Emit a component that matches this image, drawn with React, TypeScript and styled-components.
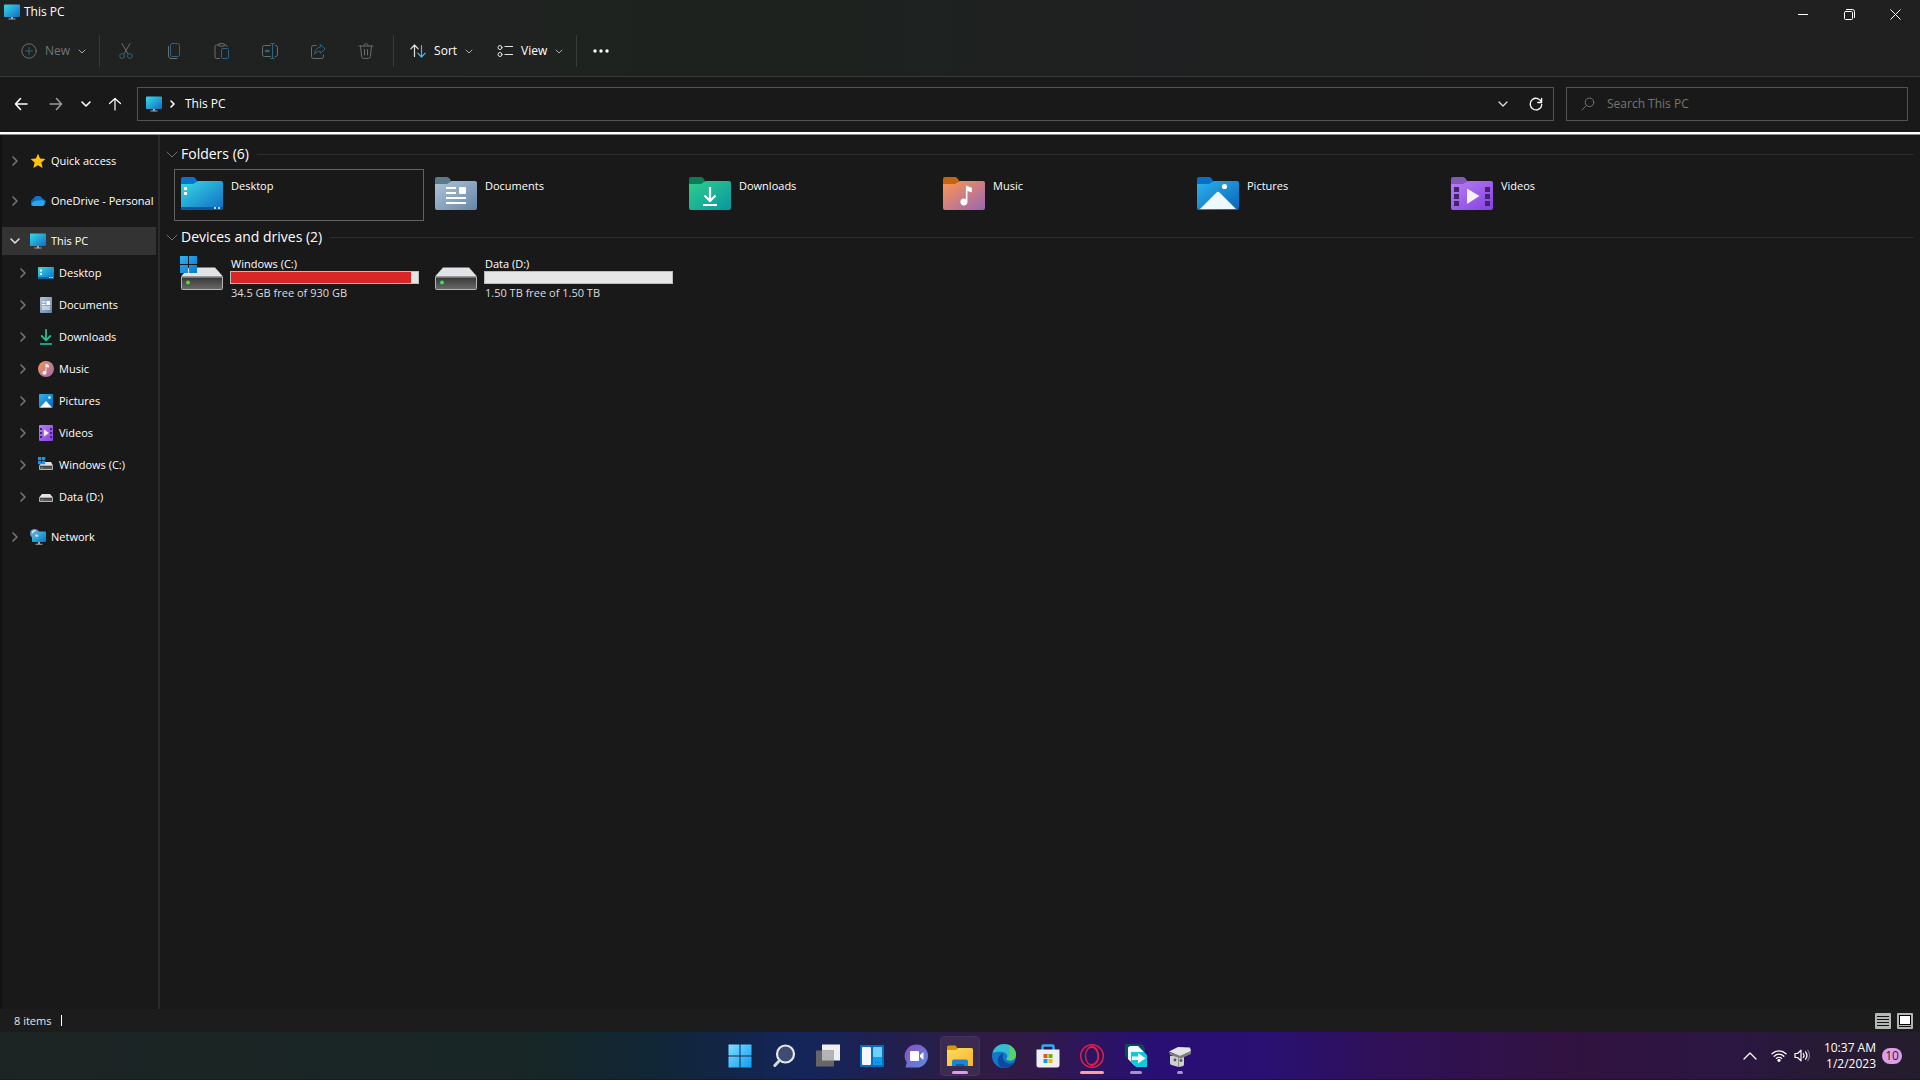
import React, { ReactNode } from "react";
import styled, { createGlobalStyle } from "styled-components";

const GlobalStyle = createGlobalStyle`
  * { box-sizing: border-box; }
  body { margin: 0; background: #191919; }
  body, button, input {
    font-family: "Open Sans", "Noto Sans", sans-serif;
    font-size: 12px;
    line-height: 16px;
    color: #fff;
  }
  button {
    border: 0;
    padding: 0;
    margin: 0;
    background: transparent;
    cursor: default;
  }
  svg { display: block; flex: none; }
  h2 { margin: 0; font-weight: 400; }
  ul { list-style: none; margin: 0; padding: 0; }
`;

const Screen = styled.div`
  display: flex;
  flex-direction: column;
  min-height: 100vh;
`;

/* ---------- window header ---------- */

const Header = styled.header`
  border-bottom: 1px solid #3a3a3a;
  background: linear-gradient(90deg, #202121 0%, #1f2220 28%, #1d221e 40%, #1e2120 52%, #1e2021 60%, #202020 75%, #202020 100%);
`;

const TitleBar = styled.div`
  display: flex;
  justify-content: space-between;
  align-items: flex-start;
  height: 28px;
  padding: 0 2px 0 4px;
`;

const Title = styled.div`
  display: flex;
  align-items: center;
  gap: 4px;
  height: 24px;
`;

const WindowButtons = styled.div`
  display: flex;
`;

const WindowButton = styled.button`
  display: grid;
  place-items: center;
  width: 46px;
  height: 28px;
`;

const Toolbar = styled.div`
  display: flex;
  align-items: center;
  height: 48px;
  padding: 0 5px 2px;
`;

const ToolGroup = styled.div`
  display: flex;
  align-items: center;
  height: 32px;
  padding: 0 3px 0 2px;
  border-right: 1px solid #393b3a;
`;

const TextTool = styled.button<{ $dim?: boolean }>`
  display: flex;
  align-items: center;
  gap: 8px;
  height: 32px;
  padding: 0 10px 0 14px;
  color: ${(p) => (p.$dim ? "#747575" : "#fff")};
`;

const IconTool = styled.button`
  display: grid;
  place-items: center;
  width: 48px;
  height: 32px;
`;

/* ---------- navigation row ---------- */

const NavRow = styled.div`
  display: flex;
  align-items: center;
  height: 55px;
  padding: 0 12px 1px 6px;
  background: #191919;
`;

const NavButtons = styled.div`
  display: flex;
  align-items: center;
  width: 131px;
`;

const NavButton = styled.button<{ $w: number }>`
  display: grid;
  place-items: center;
  width: ${(p) => p.$w}px;
  height: 32px;
`;

const Field = styled.div`
  display: flex;
  align-items: center;
  height: 34px;
  border: 1px solid #535353;
`;

const AddressBar = styled(Field)`
  flex: 1;
  gap: 6px;
  padding: 0 5px 0 8px;
`;

const Crumb = styled.a`
  flex: 1;
  padding-left: 3px;
  color: #fff;
  text-decoration: none;
`;

const SearchBox = styled(Field)`
  width: 342px;
  gap: 12px;
  margin-left: 12px;
  padding: 0 14px;
`;

const SearchInput = styled.input`
  flex: 1;
  min-width: 0;
  border: 0;
  padding: 0;
  outline: 0;
  background: transparent;
  &::placeholder { color: #767676; opacity: 1; }
`;

const LoadingLine = styled.div`
  height: 3px;
  background: #fff;
  border-bottom: 1px solid #8a8a8a;
`;

/* ---------- body ---------- */

const Body = styled.div`
  display: flex;
  flex: 1;
`;

const Sidebar = styled.nav`
  width: 160px;
  padding: 12px 2px 0 0;
  border-left: 2px solid #121212;
  border-right: 2px solid #2b2b2b;
`;

const Tree = styled.ul`
  display: flex;
  flex-direction: column;
  gap: 12px;
`;

const Branch = styled.ul`
  display: flex;
  flex-direction: column;
  gap: 4px;
  padding-top: 4px;
`;

const TreeRow = styled.button<{ $child?: boolean; $active?: boolean }>`
  display: grid;
  grid-template-columns: 24px 16px 1fr;
  align-items: center;
  width: 100%;
  height: 28px;
  padding-left: ${(p) => (p.$child ? 12 : 4)}px;
  background: ${(p) => (p.$active ? "#333" : "transparent")};
  font-size: 11px;
  text-align: left;
  white-space: nowrap;
`;

const TreeChevron = styled.span`
  display: grid;
  place-items: center;
  width: 18px;
`;

const TreeLabel = styled.span`
  padding-left: 5px;
`;

const Content = styled.main`
  flex: 1;
  min-width: 0;
  padding: 8px 6px 0;
`;

const Group = styled.section`
  margin-bottom: 5px;
`;

const GroupHeader = styled.h2`
  display: flex;
  align-items: center;
  gap: 3px;
  height: 22px;
  font-size: 14px;
  line-height: 20px;
  &::after {
    content: "";
    flex: 1;
    height: 1px;
    margin-left: 5px;
    background: #2e2e2e;
  }
`;

const Tiles = styled.div`
  display: grid;
  grid-template-columns: repeat(auto-fill, 250px);
  gap: 4px;
  padding: 4px 0 0 8px;
`;

const Tile = styled.button<{ $selected?: boolean }>`
  display: flex;
  align-items: flex-start;
  gap: 8px;
  height: 52px;
  padding: 7px 4px 0 6px;
  border: 1px solid ${(p) => (p.$selected ? "#626262" : "transparent")};
  font-size: 11px;
  text-align: left;
`;

const TileName = styled.span`
  padding-top: 1px;
`;

const DriveTile = styled(Tile)`
  padding: 3px 4px 0 5px;
`;

const DriveInfo = styled.span`
  display: flex;
  flex-direction: column;
  flex: 1;
  line-height: 15px;
`;

const Bar = styled.span`
  display: block;
  height: 13px;
  margin-left: -1px;
  border: 1px solid #bcbcbc;
  background: #e6e6e6;
`;

const BarFill = styled.span`
  display: block;
  height: 100%;
  background: #da2626;
`;

const Small = styled.span`
  padding-top: 1px;
  color: #dcdcdc;
`;

const StatusBar = styled.footer`
  display: flex;
  align-items: center;
  justify-content: space-between;
  height: 23px;
  padding: 0 7px 0 14px;
  background: #1c1c1c;
`;

const ItemCount = styled.span`
  display: flex;
  align-items: center;
  gap: 10px;
  font-size: 11px;
  color: #e6e6e6;
  &::after {
    content: "";
    width: 1px;
    height: 11px;
    background: #fff;
  }
`;

const ViewToggles = styled.div`
  display: flex;
  gap: 6px;
`;

/* ---------- taskbar ---------- */

const TaskbarRoot = styled.div`
  display: grid;
  grid-template-columns: 1fr auto 1fr;
  align-items: center;
  height: 48px;
  border-bottom: 1px solid #21161f;
  background: linear-gradient(90deg, #1d2424 0%, #1a2625 16%, #182725 27%, #112636 34%, #14255a 42%, #1f2050 46%, #2f1c44 51%, #301a48 54%, #2c1460 57%, #290f74 60%, #2a1072 66%, #2f1058 72%, #31123f 82%, #2b1642 90%, #271936 94%, #241d2c 100%);
`;

const Apps = styled.div`
  grid-column: 2;
  display: flex;
  gap: 4px;
`;

const AppButton = styled.button<{ $active?: boolean }>`
  display: flex;
  flex-direction: column;
  align-items: center;
  justify-content: flex-end;
  gap: 3px;
  width: 40px;
  height: 40px;
  padding-bottom: 1px;
  border-radius: 4px;
  border: 1px solid ${(p) => (p.$active ? "#453458" : "transparent")};
  background: ${(p) => (p.$active ? "#3c2b50" : "transparent")};
`;

const Indicator = styled.span<{ $w: number; $color: string }>`
  width: ${(p) => p.$w}px;
  height: 3px;
  border-radius: 2px;
  background: ${(p) => p.$color};
`;

const Tray = styled.div`
  display: flex;
  align-items: center;
  justify-content: flex-end;
  padding-right: 18px;
`;

const TrayButton = styled.button`
  display: flex;
  align-items: center;
  gap: 7px;
  padding: 0 7px;
`;

const Clock = styled.button`
  padding: 0 6px 0 7px;
  text-align: right;
  line-height: 16px;
`;

const Badge = styled.span`
  width: 20px;
  height: 16px;
  border-radius: 8px;
  background: #de9ee6;
  color: #2a1a30;
  text-align: center;
`;

/* ---------- line icons ---------- */

type LineProps = { w?: number; h?: number; color?: string; sw?: number; children: ReactNode };
const Line = ({ w = 16, h = 16, color = "#fff", sw = 1, children }: LineProps) => (
  <svg width={w} height={h} viewBox={`0 0 ${w} ${h}`} fill="none" stroke={color} strokeWidth={sw} strokeLinecap="round" strokeLinejoin="round" aria-hidden="true">
    {children}
  </svg>
);

const ChevronDown = ({ color = "#aaa", size = 6, sw = 1 }: { color?: string; size?: number; sw?: number }) => (
  <Line w={size + 2} h={size / 2 + 2} color={color} sw={sw}>
    <path d={`M1 1l${size / 2} ${size / 2} ${size / 2}-${size / 2}`} />
  </Line>
);

const ChevronRight = ({ color = "#757575" }: { color?: string }) => (
  <Line w={6} h={10} color={color} sw={1.6}>
    <path d="M1 1l4 4-4 4" />
  </Line>
);

const CrumbArrow = () => (
  <Line w={8} h={8} sw={1.6}>
    <path d="M3 1l3 3-3 3" />
  </Line>
);

const GREY = "#6b6d6c";
const BLUE = "#2d6482";

const NewIcon = () => (
  <Line color={GREY}>
    <circle cx="8" cy="8" r="7.2" />
    <path d="M8 4.5v7M4.5 8h7" stroke={BLUE} />
  </Line>
);
const CutIcon = () => (
  <Line color={GREY}>
    <path d="M4 .6l5.8 10M12 .6L6.2 10.6" />
    <circle cx="4.1" cy="13" r="2.4" stroke={BLUE} />
    <circle cx="11.9" cy="13" r="2.4" stroke={BLUE} />
  </Line>
);
const CopyIcon = () => (
  <Line color={GREY}>
    <path d="M2.500 3.500v9.500a2.500 2.500 0 0 0 2.500 2.500h6" />
    <rect x="4.5" y=".5" width="9" height="13" rx="1.8" stroke={BLUE} />
  </Line>
);
const PasteIcon = () => (
  <Line color={GREY}>
    <path d="M5 2H2.500A1.500 1.500 0 0 0 1 3.500V14a1.500 1.500 0 0 0 1.500 1.500H5.500M10 2h1.500A1.500 1.500 0 0 1 13 3.500" />
    <rect x="4.5" y=".6" width="6" height="2.6" rx="1.3" />
    <rect x="7.5" y="5.5" width="7" height="10" rx="1.2" stroke={BLUE} />
  </Line>
);
const RenameIcon = () => (
  <Line color={GREY}>
    <path d="M8.500 2.500h-6a2 2 0 0 0-2 2v7a2 2 0 0 0 2 2h6M13 2.500h.5a2 2 0 0 1 2 2v7a2 2 0 0 1-2 2H13" />
    <path d="M10.500 .5v15M8.700 .5h3.600M8.700 15.500h3.600" stroke={BLUE} />
    <path d="M3 8h4.500" stroke={BLUE} strokeWidth="2.4" strokeLinecap="butt" />
  </Line>
);
const ShareIcon = () => (
  <Line color={GREY}>
    <path d="M6 2.500H3.500a2 2 0 0 0-2 2v9a2 2 0 0 0 2 2h8a2 2 0 0 0 2-2V12" />
    <path d="M10.200 1.500l5 4.500-5 4.500V8.200C7.800 8.200 6 9 4.600 11.200c.2-4 2.200-6.800 5.600-7.200z" stroke={BLUE} />
  </Line>
);
const DeleteIcon = () => (
  <Line color={GREY}>
    <path d="M1 3h14M5.800 3c0-1.400.9-2.300 2.200-2.300s2.200.9 2.200 2.300M2.500 3l1.100 10.600a2 2 0 0 0 2 1.800h4.800a2 2 0 0 0 2-1.800L13.500 3M6.500 6.500v5.500M9.500 6.500v5.500" />
  </Line>
);
const SortIcon = () => (
  <Line color="#e0e0e0" sw={1.2}>
    <path d="M4.500 13.500V2M.8 5.800L4.500 2l3.700 3.800" />
    <path d="M11.500 2.500v11.500M7.800 10.200l3.700 3.800 3.700-3.800" stroke="#4cb5ee" />
  </Line>
);
const ViewIcon = () => (
  <Line color="#e4e4e4">
    <circle cx="3" cy="4.5" r="2" />
    <circle cx="3" cy="11.5" r="2" />
    <path d="M8 3.500h7.500M8 11.500h7.500" strokeWidth="1.2" />
  </Line>
);
const DotsIcon = () => (
  <svg width="16" height="16" viewBox="0 0 16 16" fill="#fff" aria-hidden="true">
    <circle cx="2" cy="8" r="1.7" />
    <circle cx="8" cy="8" r="1.7" />
    <circle cx="14" cy="8" r="1.7" />
  </svg>
);
const SearchIcon = () => (
  <Line w={14} h={14} color="#747474">
    <circle cx="8.5" cy="5.3" r="4.3" />
    <path d="M5.400 8.500L1 13" />
  </Line>
);

/* ---------- colour icons ---------- */

const DefsSvg = styled.svg`
  position: absolute;
`;

const Defs = () => (
  <DefsSvg width="0" height="0" aria-hidden="true">
    <defs>
      {[
        ["gCyan", "#38dbe6", "#0f6cc4"],
        ["gDoc", "#b0c4da", "#6686a6"],
        ["gDown", "#32ce8c", "#0796a2"],
        ["gMusic", "#ff9650", "#9a66b4"],
        ["gPic", "#2eb2ec", "#0864bc"],
        ["gVid", "#b880f4", "#8440e0"],
        ["gStart", "#7ee0ff", "#109cf4"],
        ["gWin", "#30b0f4", "#0878d4"],
        ["gChat", "#8c50b8", "#5a8ce8"],
        ["gFile", "#ffdc60", "#f8b42c"],
      ].map(([id, a, b]) => (
        <linearGradient key={id} id={id} x1="0" y1="0" x2="1" y2="1">
          <stop offset="0" stopColor={a} />
          <stop offset="1" stopColor={b} />
        </linearGradient>
      ))}
      <linearGradient id="gDrive" x1="0" y1="0" x2="0" y2="1">
        <stop offset="0" stopColor="#363636" />
        <stop offset="1" stopColor="#6a6a6a" />
      </linearGradient>
    </defs>
  </DefsSvg>
);

const Pic = ({ w = 16, h = 16, children }: { w?: number; h?: number; children: ReactNode }) => (
  <svg width={w} height={h} viewBox={`0 0 ${w} ${h}`} aria-hidden="true">{children}</svg>
);

const Monitor = () => (
  <Pic>
    <rect width="16" height="12.5" y=".5" rx=".8" fill="url(#gCyan)" />
    <path d="M7 13h2v1.600h2.500v1h-7v-1H7z" fill="#a0aab2" />
  </Pic>
);
const Star = () => (
  <Pic>
    <path d="M8 .8l2.100 4.800 5.300.5-4 3.500 1.200 5.300L8 12.200 3.400 14.900l1.200-5.300-4-3.500 5.300-.5z" fill="#ffc20e" />
  </Pic>
);
const Cloud = () => (
  <Pic>
    <path d="M3.600 12.500A3.600 3.600 0 0 1 3.400 5.600 5.200 5.200 0 0 1 12.600 6L8 11z" fill="#0a66bc" />
    <path d="M3.400 5.600a5.200 5.200 0 0 1 9.200.4c2.300.3 3.400 1.800 3.400 3.400l-6-.4z" fill="#0c76d0" />
    <path d="M1 11.200c2-2.800 4-4 6.500-3.600 2 0 4-.8 6 .2A2.900 2.900 0 0 1 13 13H3.600c-1 0-2-.6-2.600-1.800z" fill="#28a8ea" />
  </Pic>
);
const DeskSmall = () => (
  <Pic>
    <rect y="2" width="16" height="12" rx="1" fill="url(#gCyan)" />
    <path d="M2 4.500h2v2H2zM2 8h2v2H2z" fill="#fff" />
    <path d="M0 12h16v1a1 1 0 0 1-1 1H1a1 1 0 0 1-1-1z" fill="#0d62a8" />
    <path d="M11 12h1.500v1H11zM13.300 12h1.500v1h-1.500z" fill="#cfe8ff" />
  </Pic>
);
const DocSmall = () => (
  <Pic>
    <rect x="2" width="12" height="16" rx="1" fill="url(#gDoc)" />
    <path d="M4 4.500h3.500v1H4zM4 7h3.500v1H4zM8.500 4h3.500v4H8.500zM4 9.500h8v1H4zM4 11.500h8v1H4z" fill="#fff" />
  </Pic>
);
const DownSmall = () => (
  <Line color="#27bf97" sw={1.8}>
    <path d="M8 1v10M3.700 7L8 11.300 12.300 7" />
    <path d="M2 15h12" stroke="#17b09a" strokeLinecap="butt" />
  </Line>
);
const Note = ({ t }: { t: string }) => (
  <g transform={t} fill="#fff">
    <path d="M5 0l5 2v4L6.300 4.600V14a3 3 0 1 1-1.300-2.500z" />
  </g>
);
const MusicSmall = () => (
  <Pic>
    <circle cx="8" cy="8" r="8" fill="url(#gMusic)" />
    <Note t="translate(4.4 2.8) scale(.64)" />
  </Pic>
);
const PicSmall = () => (
  <Pic>
    <rect x="1" y="1" width="14" height="14" rx="1" fill="url(#gPic)" />
    <path d="M2 14.500L8 8l6 6.500z" fill="#fff" />
    <circle cx="11.5" cy="4.5" r="1.3" fill="#fff" />
  </Pic>
);
const VidSmall = () => (
  <Pic>
    <rect x="1" width="14" height="16" rx="1" fill="url(#gVid)" />
    <path d="M2 3h2v2H2zM2 7h2v2H2zM2 11h2v2H2zM12 3h2v2h-2zM12 7h2v2h-2zM12 11h2v2h-2z" fill="#432468" />
    <path d="M6 4.500L11 8l-5 3.500z" fill="#f4f0fa" />
  </Pic>
);
const DriveShape = () => (
  <>
    <path d="M8 0h26l8 9H0z" fill="#e2e3e6" />
    <path d="M.5 9.500h41V21a1 1 0 0 1-1 1h-39a1 1 0 0 1-1-1z" fill="url(#gDrive)" stroke="#b4b4b4" />
    <circle cx="7" cy="15" r="2" fill="#3fe03f" />
  </>
);
const DataSmall = () => (
  <Pic>
    <path d="M4 5h8l3 3.500H1z" fill="#e2e3e6" />
    <path d="M1.500 8.500h13v4h-13z" fill="url(#gDrive)" stroke="#b0b0b0" />
    <path d="M3.500 10h1.200v1.200H3.500z" fill="#3fe03f" />
  </Pic>
);
const WinSmall = () => (
  <Pic>
    <path d="M5 5h8l2 3.500H1z" fill="#e2e3e6" />
    <path d="M1.500 8.500h13v4h-13z" fill="url(#gDrive)" stroke="#b0b0b0" />
    <path d="M3.500 10h1.200v1.200H3.500z" fill="#3fe03f" />
    <path d="M0 0h3.300v3.300H0zM3.900 0h3.300v3.300H3.900zM0 3.900h3.300v3.300H0zM3.900 3.900h3.300v3.300H3.900z" fill="#1c94e8" />
  </Pic>
);
const NetworkIcon = () => (
  <Pic>
    <rect x="2" y="2.5" width="14" height="10.5" rx=".8" fill="url(#gCyan)" />
    <path d="M8 13h2v1.700h2.500v1h-7v-1H8z" fill="#a0aab2" />
    <circle cx="4.6" cy="4.6" r="4.6" fill="#58a0d4" />
    <path d="M1.500 2.500C3 1 5 .6 6 1.200 5.500 3 3 3 2.500 5zM5 6c2-1 3 0 3.400 1C7 8.500 5.500 8 5 6z" fill="#c8e6f6" />
  </Pic>
);

const Folder = ({ fill, tab, children }: { fill: string; tab: string; children: ReactNode }) => (
  <Pic w={42} h={33}>
    <path d="M0 2a2 2 0 0 1 2-2h10c1.500 0 2.300.8 3.500 3l2 3L0 14z" fill={tab} />
    <path d="M0 7h12l5-3h23a2 2 0 0 1 2 2v25a2 2 0 0 1-2 2H2a2 2 0 0 1-2-2z" fill={fill} />
    {children}
  </Pic>
);

const folders = [
  { name: "Desktop", selected: true, icon: (
    <Folder fill="url(#gCyan)" tab="#0a72cc">
      <path d="M3 10h3v3H3zM3 15h3v3H3z" fill="#fff" />
      <path d="M0 30h42v1a2 2 0 0 1-2 2H2a2 2 0 0 1-2-2z" fill="#0c5a9c" />
      <path d="M33 30h2v2h-2zM37 30h2v2h-2z" fill="#b0dcff" />
    </Folder>) },
  { name: "Documents", icon: (
    <Folder fill="url(#gDoc)" tab="#5c7a8e">
      <path d="M11 10h10v2H11zM11 15h10v2H11zM11 20h20v2H11zM11 25h20v2H11z" fill="#fff" />
      <rect x="24" y="10" width="7" height="7" rx="1" fill="#fff" />
    </Folder>) },
  { name: "Downloads", icon: (
    <Folder fill="url(#gDown)" tab="#0a7c5c">
      <path d="M21 10v14M15.500 18.500L21 24l5.500-5.500" fill="none" stroke="#fff" strokeWidth="2.2" />
      <path d="M14 28h14" stroke="#fff" strokeWidth="2" />
    </Folder>) },
  { name: "Music", icon: (
    <Folder fill="url(#gMusic)" tab="#c4640e">
      <Note t="translate(17 8.5) scale(1.18)" />
    </Folder>) },
  { name: "Pictures", icon: (
    <Folder fill="url(#gPic)" tab="#0670c8">
      <path d="M3 32L19.500 15.600a2 2 0 0 1 3 0L39 32z" fill="#f0f8ff" />
      <circle cx="27.5" cy="9.5" r="2.6" fill="#fff" />
    </Folder>) },
  { name: "Videos", icon: (
    <Folder fill="url(#gVid)" tab="#8258b8">
      <path d="M3 10h5v5H3zM3 17h5v5H3zM3 24h5v5H3zM34 10h5v5h-5zM34 17h5v5h-5zM34 24h5v5h-5z" fill="#432468" />
      <path d="M16 11.500L28.500 19 16 27z" fill="#f4f0f8" />
    </Folder>) },
];

const drives = [
  { name: "Windows (C:)", used: 96, detail: "34.5 GB free of 930 GB", system: true },
  { name: "Data (D:)", used: 0, detail: "1.50 TB free of 1.50 TB", system: false },
];

const DriveIcon = ({ system }: { system: boolean }) => (
  <Pic w={43} h={34}>
    <g transform="translate(1 11.5)"><DriveShape /></g>
    {system && <path d="M0 0h8v8H0zM9 0h8v8H9zM0 9h8v8H0zM9 9h8v8H9z" fill="url(#gWin)" />}
  </Pic>
);

const pcItems = [
  { name: "Desktop", icon: <DeskSmall /> },
  { name: "Documents", icon: <DocSmall /> },
  { name: "Downloads", icon: <DownSmall /> },
  { name: "Music", icon: <MusicSmall /> },
  { name: "Pictures", icon: <PicSmall /> },
  { name: "Videos", icon: <VidSmall /> },
  { name: "Windows (C:)", icon: <WinSmall /> },
  { name: "Data (D:)", icon: <DataSmall /> },
];

const TreeItem = ({ name, icon, child, open }: { name: string; icon: ReactNode; child?: boolean; open?: boolean }) => (
  <TreeRow $child={child} $active={open} aria-expanded={!!open}>
    <TreeChevron>{open ? <ChevronDown color="#dcdcdc" size={8} sw={1.6} /> : <ChevronRight />}</TreeChevron>
    {icon}
    <TreeLabel>{name}</TreeLabel>
  </TreeRow>
);

/* ---------- taskbar apps ---------- */

const apps: { name: string; icon: ReactNode; active?: boolean; bar?: [number, string] }[] = [
  { name: "Start", icon: <Pic w={24} h={24}><path d="M.5.5h11v11H.5zM12.500.5h11v11h-11zM.5 12.500h11v11H.5zM12.500 12.500h11v11h-11z" fill="url(#gStart)" /></Pic> },
  { name: "Search", icon: <Pic w={24} h={24}><circle cx="13.5" cy="10" r="8.5" fill="#3d4c72" stroke="#e8e8e8" strokeWidth="2.2" /><path d="M7.500 16.500L2.800 21.500" stroke="#d8d8d8" strokeWidth="3" strokeLinecap="round" /></Pic> },
  { name: "Task view", icon: <Pic w={24} h={24}><path d="M6 .5h18v16H6z" fill="#f0f0f0" /><path d="M0 6.500h18v16H0z" fill="#666" /><path d="M6 6.500h12v10H6z" fill="#b4b4b4" /></Pic> },
  { name: "Widgets", icon: <Pic w={24} h={24}><rect y="1" width="24" height="22" rx="1" fill="#0a6cbc" /><rect x="2" y="3" width="9" height="18" rx="1" fill="#f4f8fc" /><rect x="13" y="3" width="9" height="10" rx=".8" fill="#6cd2fc" /><rect x="13" y="13" width="9" height="8" fill="#129cf0" /><path d="M15 18.500h5" stroke="#0b62b0" strokeDasharray="1 1" /></Pic> },
  { name: "Chat", icon: <Pic w={24} h={24}><path d="M12.500.5a11.500 11.500 0 1 1 0 23H1.500l1.200-5A11.500 11.500 0 0 1 12.500.5z" fill="url(#gChat)" /><rect x="6" y="7" width="9" height="10" rx="1" fill="#fff" /><path d="M16 11l3.500-3v8L16 13z" fill="#fff" /></Pic> },
  { name: "File Explorer", active: true, bar: [16, "#e09be4"], icon: <Pic w={26} h={24}><path d="M0 3a1.500 1.500 0 0 1 1.500-1.500h7L11 5v4H0z" fill="#d89800" /><path d="M0 6h9l2-2h13.500A1.500 1.500 0 0 1 26 5.500V22H0z" fill="url(#gFile)" /><path d="M5 22v-4.500A2 2 0 0 1 7 15.500h12a2 2 0 0 1 2 2V22z" fill="#1c84d4" /><path d="M9 22v-2h8v2z" fill="#0c5ea8" /></Pic> },
  { name: "Edge", icon: (
    <Pic w={24} h={24}>
      <circle cx="12" cy="12" r="12" fill="#0f78cc" />
      <path d="M.6 9C2 3.500 6.500 0 12 0c7 0 12 5 12 10.500 0 4-3 6-6 6-2.500 0-4-1-3.500-2 1.500-2 .8-5.500-3-6.300C7 7.300 2.500 8.500.6 9z" fill="#34bcd0" />
      <path d="M17 1.200c4.500 2 7 5.500 7 9.300 0 4-3 6-6 6-2.500 0-4-1-3.500-2 3 0 4.500-8 2.500-13.300z" fill="#56d468" />
      <path d="M7 21.500c-3-5.500 0-11 4.500-12.500-2 3-1 9 5 10.500 3 .6 5-.4 6.300-1.500C20 23 13 26 7 21.500z" fill="#0b4a9c" />
    </Pic>) },
  { name: "Microsoft Store", icon: <Pic w={24} h={24}><path d="M6.500 6.500V2.500a1 1 0 0 1 1-1h9a1 1 0 0 1 1 1v4" fill="none" stroke="#2cb0f4" strokeWidth="2.4" /><path d="M.5 5.500h23V21a2.500 2.500 0 0 1-2.500 2.500H3A2.500 2.500 0 0 1 .5 21z" fill="#eef0f4" /><path d="M7.500 10h4v4h-4z" fill="#f25022" /><path d="M12.500 10h4v4h-4z" fill="#6cb400" /><path d="M7.500 15h4v4h-4z" fill="#08a0ec" /><path d="M12.500 15h4v4h-4z" fill="#fcb400" /></Pic> },
  { name: "Opera", bar: [24, "#f8a0a4"], icon: <Pic w={24} h={24}><g fill="none" stroke="#e0204c"><circle cx="12" cy="12" r="11.3" strokeWidth="1.4" /><ellipse cx="12" cy="12" rx="6.5" ry="9.5" strokeWidth="1.3" /><path d="M9 4c5-2 9 2 9 8s-4 10-9 8" strokeWidth="1.3" /></g></Pic> },
  { name: "Transfer", bar: [12, "#a894c4"], icon: <Pic w={24} h={24}><path d="M1 0h14a6 6 0 0 1 6 5v5H1z" fill="#0b4764" /><path d="M1 0h5v17l-5-5z" fill="#07505a" /><path d="M4 3.500l2-1.500h8l6 6v4l-9 10-7-7z" fill="#f4fbff" /><path d="M7 8h13l3 3v12H12l-5-5z" fill="#10c8e4" /><path d="M8 12.500h6V9l7.500 5.200L14 19.500V16H8z" fill="#fff" /></Pic> },
  { name: "Camera", bar: [6, "#a894c4"], icon: <Pic w={24} h={24}><path d="M2 12h14v8.500a2 2 0 0 1-1.500 1.800l-4 .7-7-2A2 2 0 0 1 2 19z" fill="#cfcfcf" /><path d="M10 13h1v10h-1z" fill="#8e8e8e" /><circle cx="7" cy="16" r="1.4" fill="#555" /><circle cx="13" cy="16.5" r="1.4" fill="#555" /><path d="M1 8l11 4 11-5v3l-10 4.500L2 11z" fill="#7e7e7e" /><path d="M1 7.500L10 3l12 .5 1 3.500-11 5z" fill="#e4e4e4" /></Pic> },
];

export default function App() {
  return (
    <Screen>
      <GlobalStyle />
      <Defs />
      <Header>
        <TitleBar>
          <Title><Monitor />This PC</Title>
          <WindowButtons>
            <WindowButton aria-label="Minimize"><Line w={10} h={10}><path d="M0 5.500h10" strokeLinecap="butt" /></Line></WindowButton>
            <WindowButton aria-label="Restore"><Line w={11} h={11}><rect x=".5" y="2.5" width="8" height="8" rx="1" /><path d="M2.500.5h6a2 2 0 0 1 2 2v6" /></Line></WindowButton>
            <WindowButton aria-label="Close"><Line w={11} h={11}><path d="M.7.7l9.600 9.600M10.300.7L.7 10.300" /></Line></WindowButton>
          </WindowButtons>
        </TitleBar>
        <Toolbar role="toolbar">
          <ToolGroup>
            <TextTool $dim><NewIcon />New<ChevronDown /></TextTool>
          </ToolGroup>
          <ToolGroup>
            <IconTool aria-label="Cut"><CutIcon /></IconTool>
            <IconTool aria-label="Copy"><CopyIcon /></IconTool>
            <IconTool aria-label="Paste"><PasteIcon /></IconTool>
            <IconTool aria-label="Rename"><RenameIcon /></IconTool>
            <IconTool aria-label="Share"><ShareIcon /></IconTool>
            <IconTool aria-label="Delete"><DeleteIcon /></IconTool>
          </ToolGroup>
          <ToolGroup>
            <TextTool><SortIcon />Sort<ChevronDown /></TextTool>
            <TextTool><ViewIcon />View<ChevronDown /></TextTool>
          </ToolGroup>
          <IconTool aria-label="See more"><DotsIcon /></IconTool>
        </Toolbar>
      </Header>

      <NavRow>
        <NavButtons>
          <NavButton $w={30} aria-label="Back"><Line w={14} h={14} sw={1.6}><path d="M13 7H1.500M6.500 1.500L1.500 7l5 5.500" /></Line></NavButton>
          <NavButton $w={40} aria-label="Forward"><Line w={14} h={14} sw={1.6} color="#999"><path d="M1 7h11.500M7.500 1.500l5 5.500-5 5.500" /></Line></NavButton>
          <NavButton $w={20} aria-label="Recent locations"><ChevronDown color="#fff" size={8} sw={1.6} /></NavButton>
          <NavButton $w={38} aria-label="Up"><Line w={14} h={14} sw={1.2}><path d="M7 13V1.500M1.500 6.500L7 1.500l5.500 5" /></Line></NavButton>
        </NavButtons>
        <AddressBar>
          <Monitor />
          <CrumbArrow />
          <Crumb href="#">This PC</Crumb>
          <NavButton $w={30} aria-label="Previous locations"><ChevronDown color="#e4e4e4" size={8} sw={1.2} /></NavButton>
          <NavButton $w={24} aria-label="Refresh"><Line w={14} h={14} sw={1.3}><path d="M12.600 5.500A5.800 5.800 0 1 0 12.800 7.500M12.600 1.500v4H8.800" /></Line></NavButton>
        </AddressBar>
        <SearchBox as="label">
          <SearchIcon />
          <SearchInput type="text" aria-label="Search This PC" placeholder="Search This PC" />
        </SearchBox>
      </NavRow>
      <LoadingLine />

      <Body>
        <Sidebar>
          <Tree>
            <li><TreeItem name="Quick access" icon={<Star />} /></li>
            <li><TreeItem name="OneDrive - Personal" icon={<Cloud />} /></li>
            <li>
              <TreeItem name="This PC" icon={<Monitor />} open />
              <Branch>
                {pcItems.map((c) => (
                  <li key={c.name}><TreeItem name={c.name} icon={c.icon} child /></li>
                ))}
              </Branch>
            </li>
            <li><TreeItem name="Network" icon={<NetworkIcon />} /></li>
          </Tree>
        </Sidebar>
        <Content>
          <Group>
            <GroupHeader><ChevronDown color="#6e6e6e" size={10} />Folders (6)</GroupHeader>
            <Tiles>
              {folders.map((f) => (
                <Tile key={f.name} $selected={f.selected}>{f.icon}<TileName>{f.name}</TileName></Tile>
              ))}
            </Tiles>
          </Group>
          <Group>
            <GroupHeader><ChevronDown color="#6e6e6e" size={10} />Devices and drives (2)</GroupHeader>
            <Tiles>
              {drives.map((d) => (
                <DriveTile key={d.name}>
                  <DriveIcon system={d.system} />
                  <DriveInfo>
                    {d.name}
                    <Bar><BarFill style={{ width: `${d.used}%` }} /></Bar>
                    <Small>{d.detail}</Small>
                  </DriveInfo>
                </DriveTile>
              ))}
            </Tiles>
          </Group>
        </Content>
      </Body>

      <StatusBar>
        <ItemCount>8 items</ItemCount>
        <ViewToggles>
          <button aria-label="Details view"><Pic><rect width="16" height="16" rx="1" fill="#b4b8b4" /><path d="M2 3.500h12M2 6.500h12M2 9.500h12M2 12.500h12" stroke="#111" /></Pic></button>
          <button aria-label="Large icons view"><Pic><rect width="16" height="16" rx="1" fill="#b4b8b4" /><rect x="2.5" y="2.5" width="11" height="9" fill="#fff" stroke="#000" /><path d="M2 13.500h12" stroke="#111" /></Pic></button>
        </ViewToggles>
      </StatusBar>

      <TaskbarRoot>
        <Apps>
          {apps.map((a) => (
            <AppButton key={a.name} aria-label={a.name} $active={a.active}>
              {a.icon}
              <Indicator $w={a.bar ? a.bar[0] : 0} $color={a.bar ? a.bar[1] : "transparent"} />
            </AppButton>
          ))}
        </Apps>
        <Tray>
          <TrayButton aria-label="Show hidden icons"><Line w={14} h={8} sw={1.3}><path d="M1 7l6-6 6 6" /></Line></TrayButton>
          <TrayButton aria-label="Network and volume">
            <Line w={16} h={13} sw={1.3}>
              <path d="M1 4.800a10 10 0 0 1 14 0M3.200 7.200a6.800 6.800 0 0 1 9.600 0M5.400 9.400a3.700 3.700 0 0 1 5.200 0" />
              <circle cx="8" cy="11.3" r="1" fill="#fff" />
            </Line>
            <Line w={16} h={13} sw={1.2}>
              <path d="M1 4.500h2.500L7 1.200v10.600L3.500 8.500H1zM9.300 4.500c.9 1.200.9 2.800 0 4M11.500 2.800c1.700 2.200 1.700 5.200 0 7.400" />
              <path d="M13.700 1.200c2.300 3.200 2.300 7.400 0 10.600" stroke="#75688a" />
            </Line>
          </TrayButton>
          <Clock>10:37 AM<br />1/2/2023</Clock>
          <Badge>10</Badge>
        </Tray>
      </TaskbarRoot>
    </Screen>
  );
}
